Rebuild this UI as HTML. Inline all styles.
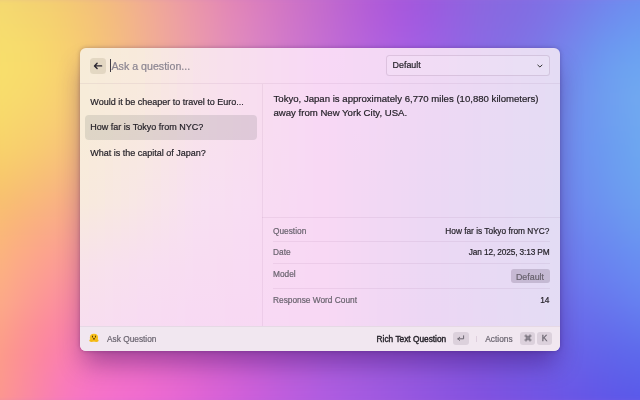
<!DOCTYPE html>
<html><head><meta charset="utf-8">
<style>
html,body{margin:0;padding:0;width:640px;height:400px;overflow:hidden;background:#b070d8;}
body{position:relative;font-family:"Liberation Sans",sans-serif;}
.bgwrap{position:absolute;left:0;top:0;width:640px;height:400px;overflow:hidden;}
.bg{position:absolute;left:0;top:0;width:640px;height:400px;filter:blur(4px);transform:scale(1.03);transform-origin:50% 50%;
 background:linear-gradient(#f5d970 0.0%,#f6dc6e 6.2%,#f7de6c 12.5%,#f8df6b 18.8%,#f8dd6b 25.0%,#f8d96a 31.2%,#f8d26a 37.5%,#f8ca6b 43.8%,#f8c16f 50.0%,#fabb75 56.2%,#fbb57c 62.5%,#fcb082 68.8%,#fcaa86 75.0%,#fca387 81.2%,#fd9d89 87.5%,#fc9a8b 93.8%,#fc978f 100.0%) 0px 0/11px 100% no-repeat,linear-gradient(#f4d771 0.0%,#f5da6f 6.2%,#f7dd6d 12.5%,#f8de6c 18.8%,#f8db6c 25.0%,#f8d76c 31.2%,#f8d16c 37.5%,#f8c86d 43.8%,#f8bf71 50.0%,#fab778 56.2%,#fbb17f 62.5%,#fcac85 68.8%,#fca68a 75.0%,#fc9e8b 81.2%,#fc978d 87.5%,#fc9591 93.8%,#fc9295 100.0%) 10px 0/11px 100% no-repeat,linear-gradient(#f4d571 0.0%,#f5d86f 6.2%,#f7dc6d 12.5%,#f8dc6c 18.8%,#f8da6d 25.0%,#f8d56d 31.2%,#f8cf6d 37.5%,#f8c670 43.8%,#f8bc74 50.0%,#fab47b 56.2%,#fcad83 62.5%,#fca789 68.8%,#fca18d 75.0%,#fc988f 81.2%,#fc9292 87.5%,#fc9097 93.8%,#fb8e9c 100.0%) 20px 0/11px 100% no-repeat,linear-gradient(#f4d271 0.0%,#f5d66f 6.2%,#f7da6d 12.5%,#f8db6c 18.8%,#f8d86d 25.0%,#f8d36e 31.2%,#f8cd6f 37.5%,#f8c472 43.8%,#f9ba77 50.0%,#fab17f 56.2%,#fcaa86 62.5%,#fca38d 68.8%,#fc9c91 75.0%,#fc9394 81.2%,#fc8d98 87.5%,#fb8b9e 93.8%,#fa89a3 100.0%) 30px 0/11px 100% no-repeat,linear-gradient(#f4d072 0.0%,#f5d46f 6.2%,#f7d86d 12.5%,#f8d96d 18.8%,#f8d66e 25.0%,#f8d170 31.2%,#f8cb71 37.5%,#f8c175 43.8%,#f9b87b 50.0%,#faae82 56.2%,#fca68a 62.5%,#fc9f90 68.8%,#fc9795 75.0%,#fc8e99 81.2%,#fc889e 87.5%,#fb86a5 93.8%,#fa84aa 100.0%) 40px 0/11px 100% no-repeat,linear-gradient(#f4ce72 0.0%,#f5d270 6.2%,#f7d56e 12.5%,#f8d66e 18.8%,#f8d370 25.0%,#f8cf72 31.2%,#f8c874 37.5%,#f8bf78 43.8%,#f9b57e 50.0%,#faac86 56.2%,#fca38d 62.5%,#fc9b94 68.8%,#fc9399 75.0%,#fc8a9e 81.2%,#fb84a4 87.5%,#fa82ac 93.8%,#f980b2 100.0%) 50px 0/11px 100% no-repeat,linear-gradient(#f4cb73 0.0%,#f5cf70 6.2%,#f7d26f 12.5%,#f8d370 18.8%,#f8d072 25.0%,#f8cc74 31.2%,#f8c577 37.5%,#f8bc7c 43.8%,#f9b282 50.0%,#faa989 56.2%,#fba091 62.5%,#fb9898 68.8%,#fb8f9e 75.0%,#fb87a3 81.2%,#fb81ab 87.5%,#fa7eb4 93.8%,#f87cb9 100.0%) 60px 0/11px 100% no-repeat,linear-gradient(#f4c874 0.0%,#f5cc72 6.2%,#f7cf71 12.5%,#f8cf72 18.8%,#f8cd74 25.0%,#f8c877 31.2%,#f8c27a 37.5%,#f8b97f 43.8%,#f8af86 50.0%,#f9a68d 56.2%,#fa9d94 62.5%,#fb949b 68.8%,#fb8ca2 75.0%,#fa84a9 81.2%,#fa7eb1 87.5%,#f97aba 93.8%,#f879bf 100.0%) 70px 0/11px 100% no-repeat,linear-gradient(#f3c577 0.0%,#f5c874 6.2%,#f6cb73 12.5%,#f7cb75 18.8%,#f7c977 25.0%,#f7c57a 31.2%,#f7be7e 37.5%,#f7b683 43.8%,#f8ad89 50.0%,#f9a391 56.2%,#fa9a98 62.5%,#fa919f 68.8%,#fa89a6 75.0%,#fa81ad 81.2%,#f97bb6 87.5%,#f878bf 93.8%,#f776c4 100.0%) 80px 0/11px 100% no-repeat,linear-gradient(#f3c179 0.0%,#f5c577 6.2%,#f6c776 12.5%,#f7c778 18.8%,#f7c57a 25.0%,#f7c17e 31.2%,#f7bb82 37.5%,#f7b387 43.8%,#f7aa8d 50.0%,#f8a094 56.2%,#f9979c 62.5%,#f98fa3 68.8%,#f986aa 75.0%,#f97fb2 81.2%,#f879bb 87.5%,#f775c3 93.8%,#f673c7 100.0%) 90px 0/11px 100% no-repeat,linear-gradient(#f3be7d 0.0%,#f4c17a 6.2%,#f5c37a 12.5%,#f6c37b 18.8%,#f6c17e 25.0%,#f6bd82 31.2%,#f6b786 37.5%,#f6af8b 43.8%,#f6a791 50.0%,#f79e98 56.2%,#f7959f 62.5%,#f88ca7 68.8%,#f884ae 75.0%,#f77db6 81.2%,#f777be 87.5%,#f673c6 93.8%,#f571ca 100.0%) 100px 0/11px 100% no-repeat,linear-gradient(#f3ba81 0.0%,#f4bd7e 6.2%,#f5bf7e 12.5%,#f5bf80 18.8%,#f5bd82 25.0%,#f5b986 31.2%,#f5b38a 37.5%,#f5ac8f 43.8%,#f5a495 50.0%,#f69b9c 56.2%,#f692a3 62.5%,#f68aaa 68.8%,#f682b2 75.0%,#f67bb9 81.2%,#f676c1 87.5%,#f572c8 93.8%,#f36fcc 100.0%) 110px 0/11px 100% no-repeat,linear-gradient(#f2b686 0.0%,#f3b983 6.2%,#f4bb83 12.5%,#f4bb84 18.8%,#f5b987 25.0%,#f4b58a 31.2%,#f4b08e 37.5%,#f4a893 43.8%,#f4a099 50.0%,#f498a0 56.2%,#f590a7 62.5%,#f587ae 68.8%,#f580b5 75.0%,#f579bc 81.2%,#f474c4 87.5%,#f370ca 93.8%,#f26ece 100.0%) 120px 0/11px 100% no-repeat,linear-gradient(#f2b28b 0.0%,#f3b589 6.2%,#f3b688 12.5%,#f4b689 18.8%,#f3b58c 25.0%,#f3b18f 31.2%,#f3ac93 37.5%,#f3a598 43.8%,#f39d9d 50.0%,#f395a3 56.2%,#f38daa 62.5%,#f385b1 68.8%,#f37eb8 75.0%,#f378bf 81.2%,#f373c6 87.5%,#f26fcb 93.8%,#f06ccf 100.0%) 130px 0/11px 100% no-repeat,linear-gradient(#f1ae90 0.0%,#f2b08f 6.2%,#f2b28e 12.5%,#f2b28f 18.8%,#f2b091 25.0%,#f2ad94 31.2%,#f2a897 37.5%,#f1a29c 43.8%,#f19aa1 50.0%,#f193a7 56.2%,#f18bae 62.5%,#f183b4 68.8%,#f17cbb 75.0%,#f176c1 81.2%,#f171c8 87.5%,#f06ecc 93.8%,#ef6bd0 100.0%) 140px 0/11px 100% no-repeat,linear-gradient(#f0a995 0.0%,#f1ac94 6.2%,#f1ad94 12.5%,#f1ae94 18.8%,#f1ac96 25.0%,#f0a999 31.2%,#f0a49c 37.5%,#f09ea0 43.8%,#ef97a5 50.0%,#ef90ab 56.2%,#ef89b1 62.5%,#ef81b7 68.8%,#ef7bbd 75.0%,#ef75c4 81.2%,#ee70c9 87.5%,#ee6cce 93.8%,#ec69d1 100.0%) 150px 0/11px 100% no-repeat,linear-gradient(#efa59a 0.0%,#f0a79a 6.2%,#f0a999 12.5%,#f0a99a 18.8%,#efa89b 25.0%,#efa59e 31.2%,#eea1a1 37.5%,#ee9ba5 43.8%,#ed94a9 50.0%,#ed8daf 56.2%,#ed86b4 62.5%,#ed7fba 68.8%,#ec79c0 75.0%,#ec73c6 81.2%,#ec6fcb 87.5%,#eb6bcf 93.8%,#ea68d2 100.0%) 160px 0/11px 100% no-repeat,linear-gradient(#eda09f 0.0%,#eea39f 6.2%,#eea49f 12.5%,#eea59f 18.8%,#eea4a0 25.0%,#eda1a2 31.2%,#ec9da5 37.5%,#ec98a9 43.8%,#eb92ad 50.0%,#eb8bb2 56.2%,#eb84b7 62.5%,#ea7dbd 68.8%,#ea77c2 75.0%,#ea72c8 81.2%,#e96dcc 87.5%,#e86ad0 93.8%,#e767d3 100.0%) 170px 0/11px 100% no-repeat,linear-gradient(#ec9ba3 0.0%,#ed9ea4 6.2%,#eda0a4 12.5%,#eca1a5 18.8%,#eca0a5 25.0%,#eb9da7 31.2%,#ea99aa 37.5%,#ea94ad 43.8%,#e98fb1 50.0%,#e988b6 56.2%,#e882bb 62.5%,#e87cc0 68.8%,#e776c5 75.0%,#e770c9 81.2%,#e66cce 87.5%,#e568d1 93.8%,#e465d4 100.0%) 180px 0/11px 100% no-repeat,linear-gradient(#ea97a7 0.0%,#eb99a9 6.2%,#eb9ca9 12.5%,#ea9caa 18.8%,#ea9caa 25.0%,#e999ac 31.2%,#e896ae 37.5%,#e791b1 43.8%,#e78cb5 50.0%,#e686b9 56.2%,#e580be 62.5%,#e57ac2 68.8%,#e474c7 75.0%,#e46fcb 81.2%,#e36bcf 87.5%,#e267d2 93.8%,#e064d5 100.0%) 190px 0/11px 100% no-repeat,linear-gradient(#e892ab 0.0%,#e995ad 6.2%,#e997ae 12.5%,#e898af 18.8%,#e898af 25.0%,#e796b1 31.2%,#e692b3 37.5%,#e58eb5 43.8%,#e489b8 50.0%,#e384bc 56.2%,#e37ec0 62.5%,#e278c5 68.8%,#e173c9 75.0%,#e06ecd 81.2%,#df69d0 87.5%,#de65d3 93.8%,#dd62d6 100.0%) 200px 0/11px 100% no-repeat,linear-gradient(#e68eaf 0.0%,#e791b1 6.2%,#e693b3 12.5%,#e694b3 18.8%,#e594b4 25.0%,#e492b5 31.2%,#e38fb7 37.5%,#e28bb9 43.8%,#e187bc 50.0%,#e081bf 56.2%,#e07cc3 62.5%,#df77c7 68.8%,#de71cb 75.0%,#dd6ccf 81.2%,#dc68d2 87.5%,#da64d4 93.8%,#d961d7 100.0%) 210px 0/11px 100% no-repeat,linear-gradient(#e489b2 0.0%,#e48cb5 6.2%,#e48fb7 12.5%,#e390b8 18.8%,#e390b8 25.0%,#e28eb9 31.2%,#e18cbb 37.5%,#e088bd 43.8%,#df84bf 50.0%,#de7fc2 56.2%,#dc7ac6 62.5%,#db75c9 68.8%,#da70cd 75.0%,#d96bd0 81.2%,#d867d3 87.5%,#d763d6 93.8%,#d560d8 100.0%) 220px 0/11px 100% no-repeat,linear-gradient(#e185b5 0.0%,#e288b9 6.2%,#e18bbb 12.5%,#e18cbc 18.8%,#e08cbc 25.0%,#df8bbd 31.2%,#de89be 37.5%,#dd85c0 43.8%,#dc81c3 50.0%,#da7dc5 56.2%,#d978c8 62.5%,#d873cc 68.8%,#d76fcf 75.0%,#d66ad2 81.2%,#d466d4 87.5%,#d362d7 93.8%,#d15fd9 100.0%) 230px 0/11px 100% no-repeat,linear-gradient(#de81b8 0.0%,#df85bc 6.2%,#de88bf 12.5%,#de89c0 18.8%,#dd89c0 25.0%,#dc88c1 31.2%,#db86c2 37.5%,#da83c4 43.8%,#d97fc6 50.0%,#d77bc8 56.2%,#d677cb 62.5%,#d572ce 68.8%,#d36ed1 75.0%,#d269d3 81.2%,#d065d6 87.5%,#cf61d8 93.8%,#cd5eda 100.0%) 240px 0/11px 100% no-repeat,linear-gradient(#db7ebb 0.0%,#dc81bf 6.2%,#db84c2 12.5%,#db85c3 18.8%,#da85c4 25.0%,#d984c4 31.2%,#d883c5 37.5%,#d780c7 43.8%,#d57dc9 50.0%,#d479cb 56.2%,#d375cd 62.5%,#d171d0 68.8%,#d06cd2 75.0%,#ce68d5 81.2%,#cc64d7 87.5%,#cb60d9 93.8%,#c95ddb 100.0%) 250px 0/11px 100% no-repeat,linear-gradient(#d87bbe 0.0%,#d87ec2 6.2%,#d880c5 12.5%,#d882c6 18.8%,#d782c7 25.0%,#d681c8 31.2%,#d580c9 37.5%,#d37dca 43.8%,#d27bcc 50.0%,#d177cd 56.2%,#cf73d0 62.5%,#ce6fd2 68.8%,#cc6bd4 75.0%,#ca67d6 81.2%,#c864d8 87.5%,#c760da 93.8%,#c55ddc 100.0%) 260px 0/11px 100% no-repeat,linear-gradient(#d478c0 0.0%,#d57ac4 6.2%,#d57dc7 12.5%,#d57ec9 18.8%,#d47fca 25.0%,#d37ecb 31.2%,#d27dcc 37.5%,#d07bcd 43.8%,#cf79ce 50.0%,#cd75d0 56.2%,#cc72d2 62.5%,#ca6ed4 68.8%,#c86ad6 75.0%,#c667d8 81.2%,#c463da 87.5%,#c25fdb 93.8%,#c15cdd 100.0%) 270px 0/11px 100% no-repeat,linear-gradient(#d175c3 0.0%,#d177c6 6.2%,#d179ca 12.5%,#d17bcc 18.8%,#d07bcd 25.0%,#cf7bce 31.2%,#ce7acf 37.5%,#cd79d0 43.8%,#cb77d1 50.0%,#ca74d2 56.2%,#c871d4 62.5%,#c66dd5 68.8%,#c46ad7 75.0%,#c266d9 81.2%,#c062db 87.5%,#be5fdc 93.8%,#bd5cde 100.0%) 280px 0/11px 100% no-repeat,linear-gradient(#cd72c5 0.0%,#ce74c9 6.2%,#ce76cc 12.5%,#ce78ce 18.8%,#cd78d0 25.0%,#cc79d0 31.2%,#cb78d1 37.5%,#c977d2 43.8%,#c875d3 50.0%,#c672d4 56.2%,#c46fd6 62.5%,#c36cd7 68.8%,#c169d9 75.0%,#bf65da 81.2%,#bc62dc 87.5%,#ba5fdd 93.8%,#b95bdf 100.0%) 290px 0/11px 100% no-repeat,linear-gradient(#c96fc7 0.0%,#ca71cb 6.2%,#ca73ce 12.5%,#ca75d1 18.8%,#ca76d2 25.0%,#c976d3 31.2%,#c776d4 37.5%,#c675d4 43.8%,#c473d5 50.0%,#c271d6 56.2%,#c16ed7 62.5%,#bf6bd9 68.8%,#bd68da 75.0%,#bb65db 81.2%,#b962dd 87.5%,#b75ede 93.8%,#b55bdf 100.0%) 300px 0/11px 100% no-repeat,linear-gradient(#c66dca 0.0%,#c66ecd 6.2%,#c770d1 12.5%,#c772d3 18.8%,#c673d4 25.0%,#c574d5 31.2%,#c474d6 37.5%,#c273d7 43.8%,#c171d7 50.0%,#bf6fd8 56.2%,#bd6dd9 62.5%,#bb6ada 68.8%,#b967db 75.0%,#b764dc 81.2%,#b561de 87.5%,#b35edf 93.8%,#b15be0 100.0%) 310px 0/11px 100% no-repeat,linear-gradient(#c26acc 0.0%,#c36bcf 6.2%,#c36dd3 12.5%,#c36fd5 18.8%,#c370d7 25.0%,#c171d8 31.2%,#c072d8 37.5%,#bf71d9 43.8%,#bd70d9 50.0%,#bb6eda 56.2%,#b96cdb 62.5%,#b769db 68.8%,#b567dc 75.0%,#b364dd 81.2%,#b161df 87.5%,#af5ee0 93.8%,#ae5ae0 100.0%) 320px 0/11px 100% no-repeat,linear-gradient(#be66ce 0.0%,#bf68d2 6.2%,#c06ad5 12.5%,#c06cd7 18.8%,#bf6ed9 25.0%,#be6fda 31.2%,#bc70da 37.5%,#bb70db 43.8%,#b96fdb 50.0%,#b76ddb 56.2%,#b66bdc 62.5%,#b469dd 68.8%,#b266dd 75.0%,#b063de 81.2%,#ae60df 87.5%,#ac5de0 93.8%,#ab5ae1 100.0%) 330px 0/11px 100% no-repeat,linear-gradient(#ba63d0 0.0%,#bb65d4 6.2%,#bc67d7 12.5%,#bc6ada 18.8%,#bb6cdb 25.0%,#ba6edc 31.2%,#b96edc 37.5%,#b76edc 43.8%,#b56edd 50.0%,#b46cdd 56.2%,#b26add 62.5%,#b068de 68.8%,#ae65de 75.0%,#ac63df 81.2%,#aa60e0 87.5%,#a95de0 93.8%,#a759e1 100.0%) 340px 0/11px 100% no-repeat,linear-gradient(#b760d3 0.0%,#b862d6 6.2%,#b965d9 12.5%,#b868dc 18.8%,#b86add 25.0%,#b66cde 31.2%,#b56dde 37.5%,#b36dde 43.8%,#b26dde 50.0%,#b06cde 56.2%,#ae6ade 62.5%,#ac67df 68.8%,#ab65df 75.0%,#a962df 81.2%,#a75fe0 87.5%,#a65ce0 93.8%,#a459e1 100.0%) 350px 0/11px 100% no-repeat,linear-gradient(#b35dd5 0.0%,#b45fd8 6.2%,#b563dc 12.5%,#b566dd 18.8%,#b469df 25.0%,#b36bdf 31.2%,#b16cdf 37.5%,#b06ce0 43.8%,#ae6ce0 50.0%,#ac6be0 56.2%,#ab69e0 62.5%,#a967e0 68.8%,#a764e0 75.0%,#a662e0 81.2%,#a45fe0 87.5%,#a35ce0 93.8%,#a258e1 100.0%) 360px 0/11px 100% no-repeat,linear-gradient(#af5bd7 0.0%,#b15dda 6.2%,#b161dd 12.5%,#b164df 18.8%,#b068e0 25.0%,#af6ae1 31.2%,#ad6be1 37.5%,#ac6ce1 43.8%,#aa6ce1 50.0%,#a96ae1 56.2%,#a769e1 62.5%,#a567e0 68.8%,#a464e0 75.0%,#a261e0 81.2%,#a15ee0 87.5%,#a05be0 93.8%,#9f57e0 100.0%) 370px 0/11px 100% no-repeat,linear-gradient(#ab59d8 0.0%,#ad5bdc 6.2%,#ae60df 12.5%,#ad63e1 18.8%,#ac67e2 25.0%,#ab69e2 31.2%,#aa6be2 37.5%,#a86be2 43.8%,#a66be2 50.0%,#a56ae2 56.2%,#a368e2 62.5%,#a266e1 68.8%,#a064e1 75.0%,#9f61e1 81.2%,#9e5ee0 87.5%,#9d5ae0 93.8%,#9c57e0 100.0%) 380px 0/11px 100% no-repeat,linear-gradient(#a758da 0.0%,#a95ade 6.2%,#aa5fe1 12.5%,#aa63e2 18.8%,#a966e3 25.0%,#a769e3 31.2%,#a66be3 37.5%,#a46be3 43.8%,#a36be3 50.0%,#a16ae3 56.2%,#a068e2 62.5%,#9e66e2 68.8%,#9d63e1 75.0%,#9c60e1 81.2%,#9b5de0 87.5%,#9a5ae0 93.8%,#9956e0 100.0%) 390px 0/11px 100% no-repeat,linear-gradient(#a458db 0.0%,#a55adf 6.2%,#a65fe2 12.5%,#a663e3 18.8%,#a566e4 25.0%,#a369e4 31.2%,#a26be5 37.5%,#a06be4 43.8%,#9f6be4 50.0%,#9d6ae4 56.2%,#9c68e3 62.5%,#9b66e3 68.8%,#9a63e2 75.0%,#9860e1 81.2%,#985de0 87.5%,#9759e0 93.8%,#9655e0 100.0%) 400px 0/11px 100% no-repeat,linear-gradient(#a059dc 0.0%,#a15be0 6.2%,#a25fe3 12.5%,#a263e4 18.8%,#a166e5 25.0%,#9f69e5 31.2%,#9e6be5 37.5%,#9d6ce5 43.8%,#9b6be5 50.0%,#9a6ae5 56.2%,#9868e4 62.5%,#9766e3 68.8%,#9663e2 75.0%,#9560e1 81.2%,#945ce1 87.5%,#9458e0 93.8%,#9354e0 100.0%) 410px 0/11px 100% no-repeat,linear-gradient(#9c5add 0.0%,#9d5ce0 6.2%,#9e60e3 12.5%,#9e64e5 18.8%,#9d67e6 25.0%,#9c6ae6 31.2%,#9a6ce6 37.5%,#996ce6 43.8%,#976ce6 50.0%,#966be5 56.2%,#9569e5 62.5%,#9466e4 68.8%,#9363e3 75.0%,#925fe2 81.2%,#915ce1 87.5%,#9158e0 93.8%,#9053e0 100.0%) 420px 0/11px 100% no-repeat,linear-gradient(#995cdd 0.0%,#995ee1 6.2%,#9a62e3 12.5%,#9a65e5 18.8%,#9968e6 25.0%,#986be7 31.2%,#966ce7 37.5%,#956de7 43.8%,#946de7 50.0%,#936be6 56.2%,#9169e5 62.5%,#9066e4 68.8%,#9063e3 75.0%,#8f5fe2 81.2%,#8e5be1 87.5%,#8e57e0 93.8%,#8d53e0 100.0%) 430px 0/11px 100% no-repeat,linear-gradient(#955fde 0.0%,#9661e1 6.2%,#9663e3 12.5%,#9666e5 18.8%,#9569e7 25.0%,#946ce7 31.2%,#936ee8 37.5%,#916ee8 43.8%,#906ee7 50.0%,#8f6ce7 56.2%,#8e6ae6 62.5%,#8d67e5 68.8%,#8c63e4 75.0%,#8c5fe2 81.2%,#8b5be1 87.5%,#8b56e0 93.8%,#8a52df 100.0%) 440px 0/11px 100% no-repeat,linear-gradient(#9261de 0.0%,#9263e1 6.2%,#9265e3 12.5%,#9268e5 18.8%,#916be7 25.0%,#906ee8 31.2%,#8f6fe8 37.5%,#8e70e8 43.8%,#8d6fe8 50.0%,#8c6de8 56.2%,#8b6be7 62.5%,#8a67e5 68.8%,#8963e4 75.0%,#895fe3 81.2%,#885ae1 87.5%,#8856e0 93.8%,#8751df 100.0%) 450px 0/11px 100% no-repeat,linear-gradient(#8f64df 0.0%,#8f65e1 6.2%,#8f67e4 12.5%,#8e6ae6 18.8%,#8e6de7 25.0%,#8c6fe8 31.2%,#8b71e9 37.5%,#8a71e9 43.8%,#8970e9 50.0%,#886fe8 56.2%,#876ce7 62.5%,#8768e6 68.8%,#8664e4 75.0%,#855fe3 81.2%,#855ae1 87.5%,#8555e0 93.8%,#8451e0 100.0%) 460px 0/11px 100% no-repeat,linear-gradient(#8c66df 0.0%,#8b68e1 6.2%,#8b69e4 12.5%,#8b6ce6 18.8%,#8a6fe8 25.0%,#8972e9 31.2%,#8873ea 37.5%,#8773ea 43.8%,#8672e9 50.0%,#8570e9 56.2%,#846de8 62.5%,#8369e7 68.8%,#8365e5 75.0%,#8260e3 81.2%,#825ae2 87.5%,#8255e0 93.8%,#8150e0 100.0%) 470px 0/11px 100% no-repeat,linear-gradient(#8968df 0.0%,#8969e1 6.2%,#886be4 12.5%,#886ee6 18.8%,#8772e8 25.0%,#8574e9 31.2%,#8475ea 37.5%,#8375ea 43.8%,#8374ea 50.0%,#8272e9 56.2%,#816ee8 62.5%,#806ae7 68.8%,#8065e6 75.0%,#7f60e4 81.2%,#7f5be2 87.5%,#7f55e1 93.8%,#7e50e0 100.0%) 480px 0/11px 100% no-repeat,linear-gradient(#8769e0 0.0%,#866be2 6.2%,#856de4 12.5%,#8471e6 18.8%,#8374e8 25.0%,#8277ea 31.2%,#8178eb 37.5%,#8078eb 43.8%,#8076eb 50.0%,#7f73ea 56.2%,#7e70e9 62.5%,#7d6be8 68.8%,#7d66e6 75.0%,#7c61e4 81.2%,#7c5be3 87.5%,#7c56e1 93.8%,#7c50e1 100.0%) 490px 0/11px 100% no-repeat,linear-gradient(#856ae1 0.0%,#846ce2 6.2%,#836fe4 12.5%,#8174e7 18.8%,#8077e9 25.0%,#7f7aea 31.2%,#7e7beb 37.5%,#7d7aec 43.8%,#7d78eb 50.0%,#7c75eb 56.2%,#7b71ea 62.5%,#7b6de8 68.8%,#7a67e7 75.0%,#7962e5 81.2%,#795ce3 87.5%,#7956e2 93.8%,#7951e1 100.0%) 500px 0/11px 100% no-repeat,linear-gradient(#836be2 0.0%,#826ee3 6.2%,#8072e5 12.5%,#7f77e8 18.8%,#7d7bea 25.0%,#7c7deb 31.2%,#7b7eec 37.5%,#7a7dec 43.8%,#7a7bec 50.0%,#7977eb 56.2%,#7973ea 62.5%,#786ee9 68.8%,#7768e7 75.0%,#7763e6 81.2%,#765de4 87.5%,#7657e3 93.8%,#7651e2 100.0%) 510px 0/11px 100% no-repeat,linear-gradient(#816de3 0.0%,#8070e4 6.2%,#7e75e6 12.5%,#7c7ae8 18.8%,#7a7eea 25.0%,#7980ec 31.2%,#7881ec 37.5%,#7880ed 43.8%,#777ded 50.0%,#777aec 56.2%,#7675eb 62.5%,#7570ea 68.8%,#756ae8 75.0%,#7464e6 81.2%,#745de5 87.5%,#7358e4 93.8%,#7352e3 100.0%) 520px 0/11px 100% no-repeat,linear-gradient(#7f6fe4 0.0%,#7e73e5 6.2%,#7b78e7 12.5%,#797ee9 18.8%,#7882eb 25.0%,#7784ec 31.2%,#7684ed 37.5%,#7583ed 43.8%,#7580ed 50.0%,#747ced 56.2%,#7477ec 62.5%,#7372ea 68.8%,#726be9 75.0%,#7165e7 81.2%,#715ee5 87.5%,#7158e4 93.8%,#7053e4 100.0%) 530px 0/11px 100% no-repeat,linear-gradient(#7e72e5 0.0%,#7b76e7 6.2%,#797de8 12.5%,#7783ea 18.8%,#7586ec 25.0%,#7488ed 31.2%,#7488ee 37.5%,#7386ee 43.8%,#7383ee 50.0%,#727fed 56.2%,#727aec 62.5%,#7173eb 68.8%,#706de9 75.0%,#6f66e8 81.2%,#6e5fe6 87.5%,#6e59e5 93.8%,#6e53e4 100.0%) 540px 0/11px 100% no-repeat,linear-gradient(#7c74e7 0.0%,#797ae8 6.2%,#7681ea 12.5%,#7487eb 18.8%,#738bed 25.0%,#728cee 31.2%,#718bee 37.5%,#718aee 43.8%,#7186ee 50.0%,#7082ee 56.2%,#707ced 62.5%,#6f75ec 68.8%,#6e6eea 75.0%,#6c67e8 81.2%,#6c60e7 87.5%,#6b5ae6 93.8%,#6b54e5 100.0%) 550px 0/11px 100% no-repeat,linear-gradient(#7a78e8 0.0%,#777eea 6.2%,#7486eb 12.5%,#728ced 18.8%,#718fed 25.0%,#7190ee 31.2%,#708fef 37.5%,#6f8def 43.8%,#6f8aef 50.0%,#6f85ee 56.2%,#6e7eee 62.5%,#6d78ed 68.8%,#6c70eb 75.0%,#6a69e9 81.2%,#6961e7 87.5%,#695be7 93.8%,#6854e6 100.0%) 560px 0/11px 100% no-repeat,linear-gradient(#777be9 0.0%,#7483eb 6.2%,#718bed 12.5%,#7091ee 18.8%,#7094ee 25.0%,#6f94ef 31.2%,#6e93ef 37.5%,#6e91ef 43.8%,#6e8def 50.0%,#6d88ef 56.2%,#6c81ee 62.5%,#6c7aed 68.8%,#6a72ec 75.0%,#686aea 81.2%,#6662e8 87.5%,#665be7 93.8%,#6654e6 100.0%) 570px 0/11px 100% no-repeat,linear-gradient(#757feb 0.0%,#7287ec 6.2%,#6f90ee 12.5%,#6e96ef 18.8%,#6f98ef 25.0%,#6e98ef 31.2%,#6d97f0 37.5%,#6d94ef 43.8%,#6d91ef 50.0%,#6c8bef 56.2%,#6b84ef 62.5%,#6a7dee 68.8%,#6974ec 75.0%,#666bea 81.2%,#6463e9 87.5%,#635be8 93.8%,#6355e7 100.0%) 580px 0/11px 100% no-repeat,linear-gradient(#7382ec 0.0%,#708bee 6.2%,#6d95ef 12.5%,#6d9bf0 18.8%,#6e9def 25.0%,#6e9cf0 31.2%,#6c9af0 37.5%,#6c98f0 43.8%,#6c94f0 50.0%,#6c8ef0 56.2%,#6a87f0 62.5%,#697fef 68.8%,#6877ed 75.0%,#656deb 81.2%,#6264e9 87.5%,#615ce8 93.8%,#6155e8 100.0%) 590px 0/11px 100% no-repeat,linear-gradient(#7186ed 0.0%,#6e8eef 6.2%,#6c98f0 12.5%,#6d9ff0 18.8%,#6fa0f0 25.0%,#6ea0f0 31.2%,#6c9ef0 37.5%,#6c9cf0 43.8%,#6c98f0 50.0%,#6b91f0 56.2%,#6a8af0 62.5%,#6982f0 68.8%,#6779ee 75.0%,#646fec 81.2%,#6065ea 87.5%,#5f5de9 93.8%,#5e55e8 100.0%) 600px 0/11px 100% no-repeat,linear-gradient(#6f89ee 0.0%,#6d92f0 6.2%,#6c9bf1 12.5%,#6da2f0 18.8%,#6fa4f0 25.0%,#6ea3f0 31.2%,#6ca1f0 37.5%,#6c9ff0 43.8%,#6c9bf0 50.0%,#6b95f0 56.2%,#698df1 62.5%,#6885f0 68.8%,#677cef 75.0%,#6371ed 81.2%,#5f67eb 87.5%,#5d5ee9 93.8%,#5c56e9 100.0%) 610px 0/11px 100% no-repeat,linear-gradient(#6d8bef 0.0%,#6c94f0 6.2%,#6b9ef1 12.5%,#6da4f1 18.8%,#70a7f0 25.0%,#6fa6f0 31.2%,#6da5f0 37.5%,#6ca2f0 43.8%,#6c9ef0 50.0%,#6b98f0 56.2%,#6990f1 62.5%,#6888f1 68.8%,#667ff0 75.0%,#6274ed 81.2%,#5e68eb 87.5%,#5c5fea 93.8%,#5a57e9 100.0%) 620px 0/11px 100% no-repeat,linear-gradient(#6c8ef0 0.0%,#6b97f1 6.2%,#6ba0f1 12.5%,#6da6f1 18.8%,#70a9f0 25.0%,#6fa9f0 31.2%,#6da8f0 37.5%,#6ca5f0 43.8%,#6ca1f0 50.0%,#6a9af1 56.2%,#6992f1 62.5%,#688af1 68.8%,#6681f0 75.0%,#6176ee 81.2%,#5d6aec 87.5%,#5a60eb 93.8%,#5958ea 100.0%) 630px 0/11px 100% no-repeat;}
.shadow{position:absolute;left:80px;top:48px;width:480px;height:303px;border-radius:6px;
 box-shadow:0 16px 26px -4px rgba(50,0,90,0.42),0 0 4px rgba(40,0,60,0.28);}
.win{position:absolute;left:80px;top:48px;width:480px;height:303px;border-radius:6px;overflow:hidden;will-change:transform;}
.wbg{position:absolute;left:0;top:0;width:480px;height:303px;background:linear-gradient(#f7ecd8 0.0%,#f7ecd9 12.9%,#f7ecd9 25.9%,#f8ebdb 38.5%,#f8eadd 51.1%,#f8e6e4 61.9%,#f8e2ea 72.7%,#f8dfee 87.1%,#f8dcf2 100.0%) 0px 0/9px 100% no-repeat,linear-gradient(#f7ecd9 0.0%,#f7ecda 12.9%,#f7ebda 25.9%,#f8eadc 38.5%,#f8e9de 51.1%,#f8e5e5 61.9%,#f8e1eb 72.7%,#f8deef 87.1%,#f8dcf2 100.0%) 8px 0/9px 100% no-repeat,linear-gradient(#f7ebd9 0.0%,#f7ebda 12.9%,#f7ebdb 25.9%,#f8eadd 38.5%,#f8e9df 51.1%,#f8e5e6 61.9%,#f8e1ec 72.7%,#f8deef 87.1%,#f8dbf2 100.0%) 16px 0/9px 100% no-repeat,linear-gradient(#f7ebda 0.0%,#f7ebdb 12.9%,#f7ebdc 25.9%,#f8e9de 38.5%,#f8e8e1 51.1%,#f8e4e7 61.9%,#f8e1ed 72.7%,#f8def0 87.1%,#f8dbf2 100.0%) 24px 0/9px 100% no-repeat,linear-gradient(#f8ebda 0.0%,#f8eadc 12.9%,#f8eadd 25.9%,#f8e9e0 38.5%,#f8e8e2 51.1%,#f8e4e8 61.9%,#f8e0ee 72.7%,#f8ddf0 87.1%,#f8dbf3 100.0%) 32px 0/9px 100% no-repeat,linear-gradient(#f8ebdb 0.0%,#f8eadd 12.9%,#f8eade 25.9%,#f8e8e1 38.5%,#f8e7e3 51.1%,#f8e3e9 61.9%,#f8e0ee 72.7%,#f8ddf1 87.1%,#f8dbf3 100.0%) 40px 0/9px 100% no-repeat,linear-gradient(#f8eadb 0.0%,#f8eadd 12.9%,#f8e9df 25.9%,#f8e8e2 38.5%,#f8e7e5 51.1%,#f8e3ea 61.9%,#f8dfef 72.7%,#f8ddf1 87.1%,#f8daf3 100.0%) 48px 0/9px 100% no-repeat,linear-gradient(#f8eadc 0.0%,#f8eade 12.9%,#f8e9e0 25.9%,#f8e8e3 38.5%,#f8e6e6 51.1%,#f8e2eb 61.9%,#f8dff0 72.7%,#f8dcf2 87.1%,#f8daf3 100.0%) 56px 0/9px 100% no-repeat,linear-gradient(#f8e9de 0.0%,#f8e8e0 12.9%,#f8e8e2 25.9%,#f8e7e5 38.5%,#f8e5e8 51.1%,#f8e2ec 61.9%,#f8dff0 72.7%,#f8dcf2 87.1%,#f8daf3 100.0%) 64px 0/9px 100% no-repeat,linear-gradient(#f8e8e0 0.0%,#f8e8e1 12.9%,#f8e7e3 25.9%,#f8e6e6 38.5%,#f8e4e9 51.1%,#f8e1ed 61.9%,#f8def1 72.7%,#f8dcf2 87.1%,#f8d9f3 100.0%) 72px 0/9px 100% no-repeat,linear-gradient(#f8e7e2 0.0%,#f8e6e3 12.9%,#f8e6e5 25.9%,#f8e5e8 38.5%,#f8e4eb 51.1%,#f8e1ee 61.9%,#f8def1 72.7%,#f8dbf2 87.1%,#f8d9f3 100.0%) 80px 0/9px 100% no-repeat,linear-gradient(#f8e6e3 0.0%,#f8e6e5 12.9%,#f8e5e6 25.9%,#f8e4e9 38.5%,#f8e3ec 51.1%,#f8e0ef 61.9%,#f8ddf1 72.7%,#f8dbf2 87.1%,#f8d9f4 100.0%) 88px 0/9px 100% no-repeat,linear-gradient(#f8e5e5 0.0%,#f8e4e7 12.9%,#f8e4e8 25.9%,#f8e3eb 38.5%,#f8e2ee 51.1%,#f8e0f0 61.9%,#f8ddf1 72.7%,#f8dbf3 87.1%,#f8d9f4 100.0%) 96px 0/9px 100% no-repeat,linear-gradient(#f8e4e7 0.0%,#f8e4e8 12.9%,#f8e3ea 25.9%,#f8e2ed 38.5%,#f8e1f0 51.1%,#f8dff1 61.9%,#f8ddf2 72.7%,#f8daf3 87.1%,#f8d8f4 100.0%) 104px 0/9px 100% no-repeat,linear-gradient(#f8e3e9 0.0%,#f8e2ea 12.9%,#f8e2eb 25.9%,#f8e1ee 38.5%,#f8e0f1 51.1%,#f8def2 61.9%,#f8dcf2 72.7%,#f8daf3 87.1%,#f8d8f4 100.0%) 112px 0/9px 100% no-repeat,linear-gradient(#f8e2ea 0.0%,#f8e2eb 12.9%,#f8e2ec 25.9%,#f8e1ef 38.5%,#f8e0f2 51.1%,#f8def2 61.9%,#f8dcf2 72.7%,#f8daf3 87.1%,#f8d8f4 100.0%) 120px 0/9px 100% no-repeat,linear-gradient(#f8e1eb 0.0%,#f8e1ec 12.9%,#f8e1ed 25.9%,#f8e0f0 38.5%,#f8dff2 51.1%,#f8ddf2 61.9%,#f8dcf2 72.7%,#f8daf3 87.1%,#f8d8f4 100.0%) 128px 0/9px 100% no-repeat,linear-gradient(#f8e0ec 0.0%,#f8e0ed 12.9%,#f8e0ee 25.9%,#f8e0f0 38.5%,#f8dff2 51.1%,#f8ddf2 61.9%,#f8dbf2 72.7%,#f8daf3 87.1%,#f8d8f4 100.0%) 136px 0/9px 100% no-repeat,linear-gradient(#f8e0ed 0.0%,#f8e0ed 12.9%,#f8e0ee 25.9%,#f8dff0 38.5%,#f8def2 51.1%,#f8ddf2 61.9%,#f8dbf2 72.7%,#f8d9f3 87.1%,#f8d8f4 100.0%) 144px 0/9px 100% no-repeat,linear-gradient(#f8dfee 0.0%,#f8dfee 12.9%,#f8dfef 25.9%,#f8def1 38.5%,#f8def3 51.1%,#f8dcf3 61.9%,#f8dbf3 72.7%,#f8d9f3 87.1%,#f8d8f4 100.0%) 152px 0/9px 100% no-repeat,linear-gradient(#f8deee 0.0%,#f8deef 12.9%,#f8deef 25.9%,#f8def1 38.5%,#f8ddf3 51.1%,#f8dcf3 61.9%,#f8dbf3 72.7%,#f8d9f3 87.1%,#f8d8f4 100.0%) 160px 0/9px 100% no-repeat,linear-gradient(#f8deef 0.0%,#f8def0 12.9%,#f8def0 25.9%,#f8ddf1 38.5%,#f8ddf3 51.1%,#f8dbf3 61.9%,#f8daf3 72.7%,#f8d9f3 87.1%,#f8d8f4 100.0%) 168px 0/9px 100% no-repeat,linear-gradient(#f8ddf0 0.0%,#f8ddf0 12.9%,#f8ddf0 25.9%,#f8dcf2 38.5%,#f8dcf3 51.1%,#f8dbf3 61.9%,#f8daf3 72.7%,#f8d9f4 87.1%,#f8d8f4 100.0%) 176px 0/9px 100% no-repeat,linear-gradient(#f8dcf1 0.0%,#f8dcf1 12.9%,#f8dcf1 25.9%,#f8dcf2 38.5%,#f8dbf3 51.1%,#f8dbf3 61.9%,#f8daf3 72.7%,#f8d9f4 87.1%,#f8d8f4 100.0%) 184px 0/9px 100% no-repeat,linear-gradient(#f8dcf2 0.0%,#f8dcf2 12.9%,#f8dcf2 25.9%,#f8dbf2 38.5%,#f8dbf3 51.1%,#f8daf3 61.9%,#f8d9f3 72.7%,#f8d9f4 87.1%,#f8d8f4 100.0%) 192px 0/9px 100% no-repeat,linear-gradient(#f8dbf2 0.0%,#f8dbf2 12.9%,#f8dbf2 25.9%,#f8dbf3 38.5%,#f8daf3 51.1%,#f8daf3 61.9%,#f8d9f3 72.7%,#f8d9f4 87.1%,#f8d8f4 100.0%) 200px 0/9px 100% no-repeat,linear-gradient(#f8daf3 0.0%,#f8daf3 12.9%,#f8daf3 25.9%,#f8daf3 38.5%,#f8daf4 51.1%,#f8d9f4 61.9%,#f8d9f4 72.7%,#f8d8f4 87.1%,#f8d8f4 100.0%) 208px 0/9px 100% no-repeat,linear-gradient(#f8daf4 0.0%,#f8daf4 12.9%,#f8daf4 25.9%,#f8daf4 38.5%,#f8d9f4 51.1%,#f8d9f4 61.9%,#f8d9f4 72.7%,#f8d8f4 87.1%,#f8d8f4 100.0%) 216px 0/9px 100% no-repeat,linear-gradient(#f8d9f5 0.0%,#f8d9f4 12.9%,#f8d9f4 25.9%,#f8d9f4 38.5%,#f8d9f4 51.1%,#f8d9f4 61.9%,#f8d8f4 72.7%,#f8d8f4 87.1%,#f8d8f4 100.0%) 224px 0/9px 100% no-repeat,linear-gradient(#f8d8f6 0.0%,#f8d8f5 12.9%,#f8d8f5 25.9%,#f8d8f4 38.5%,#f8d8f4 51.1%,#f8d8f4 61.9%,#f8d8f4 72.7%,#f8d8f4 87.1%,#f8d8f4 100.0%) 232px 0/9px 100% no-repeat,linear-gradient(#f8d8f6 0.0%,#f8d8f5 12.9%,#f8d8f5 25.9%,#f8d8f4 38.5%,#f8d8f4 51.1%,#f8d8f4 61.9%,#f8d8f4 72.7%,#f8d8f4 87.1%,#f8d8f4 100.0%) 240px 0/9px 100% no-repeat,linear-gradient(#f7d8f6 0.0%,#f7d8f5 12.9%,#f7d8f5 25.9%,#f7d8f4 38.5%,#f7d8f4 51.1%,#f7d8f4 61.9%,#f7d8f4 72.7%,#f7d8f4 87.1%,#f7d8f4 100.0%) 248px 0/9px 100% no-repeat,linear-gradient(#f7d8f6 0.0%,#f6d8f5 12.9%,#f6d8f5 25.9%,#f6d8f4 38.5%,#f6d8f4 51.1%,#f6d8f4 61.9%,#f6d8f4 72.7%,#f6d8f4 87.1%,#f6d8f4 100.0%) 256px 0/9px 100% no-repeat,linear-gradient(#f6d8f5 0.0%,#f6d8f5 12.9%,#f5d8f5 25.9%,#f5d8f4 38.5%,#f5d8f4 51.1%,#f5d8f4 61.9%,#f5d8f4 72.7%,#f5d8f4 87.1%,#f5d7f4 100.0%) 264px 0/9px 100% no-repeat,linear-gradient(#f5d8f5 0.0%,#f5d8f5 12.9%,#f5d8f5 25.9%,#f4d8f4 38.5%,#f4d8f4 51.1%,#f4d8f4 61.9%,#f4d8f4 72.7%,#f4d8f4 87.1%,#f4d7f4 100.0%) 272px 0/9px 100% no-repeat,linear-gradient(#f5d8f5 0.0%,#f4d8f5 12.9%,#f4d8f5 25.9%,#f4d8f4 38.5%,#f3d8f4 51.1%,#f3d8f4 61.9%,#f3d8f4 72.7%,#f3d8f4 87.1%,#f3d7f4 100.0%) 280px 0/9px 100% no-repeat,linear-gradient(#f4d8f5 0.0%,#f4d8f5 12.9%,#f3d8f5 25.9%,#f3d8f4 38.5%,#f2d8f4 51.1%,#f2d8f4 61.9%,#f2d8f4 72.7%,#f2d8f4 87.1%,#f2d7f4 100.0%) 288px 0/9px 100% no-repeat,linear-gradient(#f4d8f5 0.0%,#f3d8f5 12.9%,#f3d8f4 25.9%,#f2d8f4 38.5%,#f1d8f4 51.1%,#f1d8f4 61.9%,#f1d8f4 72.7%,#f1d7f4 87.1%,#f1d7f4 100.0%) 296px 0/9px 100% no-repeat,linear-gradient(#f3d8f5 0.0%,#f2d8f5 12.9%,#f2d8f4 25.9%,#f1d8f4 38.5%,#f1d8f4 51.1%,#f1d8f4 61.9%,#f1d8f4 72.7%,#f1d7f4 87.1%,#f1d7f4 100.0%) 304px 0/9px 100% no-repeat,linear-gradient(#f2d8f5 0.0%,#f2d8f4 12.9%,#f1d8f4 25.9%,#f0d8f4 38.5%,#f0d8f4 51.1%,#f0d8f4 61.9%,#f0d8f4 72.7%,#f0d7f4 87.1%,#f0d7f4 100.0%) 312px 0/9px 100% no-repeat,linear-gradient(#f2d8f4 0.0%,#f1d8f4 12.9%,#f0d8f4 25.9%,#f0d8f4 38.5%,#efd8f4 51.1%,#efd8f4 61.9%,#efd8f4 72.7%,#efd7f4 87.1%,#efd6f4 100.0%) 320px 0/9px 100% no-repeat,linear-gradient(#f1d8f4 0.0%,#f0d8f4 12.9%,#f0d8f4 25.9%,#efd8f4 38.5%,#eed8f4 51.1%,#eed8f4 61.9%,#eed8f4 72.7%,#eed7f4 87.1%,#eed6f4 100.0%) 328px 0/9px 100% no-repeat,linear-gradient(#f1d8f4 0.0%,#f0d8f4 12.9%,#efd8f4 25.9%,#eed8f4 38.5%,#edd8f4 51.1%,#edd8f4 61.9%,#edd8f4 72.7%,#edd7f4 87.1%,#edd6f4 100.0%) 336px 0/9px 100% no-repeat,linear-gradient(#f0d8f4 0.0%,#efd8f4 12.9%,#eed8f4 25.9%,#edd8f4 38.5%,#ecd8f4 51.1%,#ecd8f4 61.9%,#ecd8f4 72.7%,#ecd7f4 87.1%,#ecd6f4 100.0%) 344px 0/9px 100% no-repeat,linear-gradient(#efd8f4 0.0%,#eed8f4 12.9%,#eed8f4 25.9%,#edd8f4 38.5%,#ecd8f4 51.1%,#ecd8f4 61.9%,#ecd8f4 72.7%,#ecd7f4 87.1%,#ecd6f4 100.0%) 352px 0/9px 100% no-repeat,linear-gradient(#efd8f4 0.0%,#eed8f4 12.9%,#edd8f4 25.9%,#ecd8f4 38.5%,#ebd8f4 51.1%,#ebd8f4 61.9%,#ebd8f4 72.7%,#ebd7f4 87.1%,#ebd7f4 100.0%) 360px 0/9px 100% no-repeat,linear-gradient(#eed9f4 0.0%,#edd9f4 12.9%,#ecd9f4 25.9%,#ebd9f4 38.5%,#ead9f4 51.1%,#ead9f4 61.9%,#ead9f4 72.7%,#ebd8f4 87.1%,#ebd7f4 100.0%) 368px 0/9px 100% no-repeat,linear-gradient(#edd9f4 0.0%,#ecd9f4 12.9%,#ecd9f4 25.9%,#ebd9f4 38.5%,#ead9f4 51.1%,#ead9f4 61.9%,#ead9f4 72.7%,#ead8f4 87.1%,#ead7f4 100.0%) 376px 0/9px 100% no-repeat,linear-gradient(#ecd9f4 0.0%,#ecd9f4 12.9%,#ebd9f4 25.9%,#ead9f4 38.5%,#e9d9f4 51.1%,#e9d9f4 61.9%,#e9d9f4 72.7%,#ead8f4 87.1%,#ead8f4 100.0%) 384px 0/9px 100% no-repeat,linear-gradient(#ecd9f4 0.0%,#ebd9f4 12.9%,#ead9f4 25.9%,#e9d9f4 38.5%,#e8d9f4 51.1%,#e9d9f4 61.9%,#e9d9f4 72.7%,#e9d9f4 87.1%,#e9d8f4 100.0%) 392px 0/9px 100% no-repeat,linear-gradient(#ebdaf4 0.0%,#eadaf4 12.9%,#eadaf4 25.9%,#e9daf4 38.5%,#e8daf4 51.1%,#e8daf4 61.9%,#e8daf4 72.7%,#e8d9f4 87.1%,#e9d8f4 100.0%) 400px 0/9px 100% no-repeat,linear-gradient(#eadaf4 0.0%,#eadaf4 12.9%,#e9daf4 25.9%,#e8daf4 38.5%,#e7daf4 51.1%,#e7daf4 61.9%,#e8daf4 72.7%,#e8d9f4 87.1%,#e8d9f4 100.0%) 408px 0/9px 100% no-repeat,linear-gradient(#eadaf4 0.0%,#e9daf4 12.9%,#e9daf4 25.9%,#e8daf4 38.5%,#e7daf4 51.1%,#e7daf4 61.9%,#e7daf4 72.7%,#e7daf4 87.1%,#e8d9f4 100.0%) 416px 0/9px 100% no-repeat,linear-gradient(#e9daf4 0.0%,#e8daf4 12.9%,#e8daf4 25.9%,#e7daf4 38.5%,#e6daf4 51.1%,#e6daf4 61.9%,#e7daf4 72.7%,#e7daf4 87.1%,#e7daf4 100.0%) 424px 0/9px 100% no-repeat,linear-gradient(#e8dbf4 0.0%,#e8dbf4 12.9%,#e7dbf4 25.9%,#e6dbf4 38.5%,#e5dbf4 51.1%,#e6dbf4 61.9%,#e6dbf4 72.7%,#e6daf4 87.1%,#e7daf4 100.0%) 432px 0/9px 100% no-repeat,linear-gradient(#e7dbf4 0.0%,#e7dbf4 12.9%,#e7dbf4 25.9%,#e6dbf4 38.5%,#e5dbf4 51.1%,#e5dbf4 61.9%,#e5dbf4 72.7%,#e6dbf4 87.1%,#e6daf4 100.0%) 440px 0/9px 100% no-repeat,linear-gradient(#e7dbf4 0.0%,#e6dbf4 12.9%,#e6dbf4 25.9%,#e5dbf4 38.5%,#e4dbf4 51.1%,#e5dbf4 61.9%,#e5dbf4 72.7%,#e5dbf4 87.1%,#e6dbf4 100.0%) 448px 0/9px 100% no-repeat,linear-gradient(#e6dbf4 0.0%,#e6dbf4 12.9%,#e6dbf4 25.9%,#e5dbf4 38.5%,#e4dbf4 51.1%,#e4dbf4 61.9%,#e4dbf4 72.7%,#e5dbf4 87.1%,#e5dbf4 100.0%) 456px 0/9px 100% no-repeat,linear-gradient(#e5dcf4 0.0%,#e5dcf4 12.9%,#e5dcf4 25.9%,#e4dcf4 38.5%,#e3dcf4 51.1%,#e3dcf4 61.9%,#e4dcf4 72.7%,#e4dcf4 87.1%,#e5dbf4 100.0%) 464px 0/9px 100% no-repeat,linear-gradient(#e4dcf4 0.0%,#e4dcf4 12.9%,#e4dcf4 25.9%,#e3dcf4 38.5%,#e2dcf4 51.1%,#e3dcf4 61.9%,#e3dcf4 72.7%,#e4dcf4 87.1%,#e4dcf4 100.0%) 472px 0/9px 100% no-repeat;}
.abs{position:absolute;white-space:nowrap;}
.t{position:absolute;white-space:nowrap;-webkit-text-stroke:0.2px currentColor;}
.hdr-line{position:absolute;left:0;top:35px;width:480px;height:1px;background:rgba(60,0,60,0.06);}
.back{position:absolute;left:10px;top:10px;width:15.6px;height:15.6px;border-radius:3.5px;background:rgba(60,40,0,0.1);}
.caret{position:absolute;left:29.9px;top:11.2px;width:1.5px;height:12.4px;background:#3e3a44;}
.ph{left:31.5px;top:10.66px;font-size:10.65px;line-height:14px;color:#8b8591;}
.dd{position:absolute;left:305.9px;top:7.1px;width:163.9px;height:20.5px;border-radius:3.5px;border:1px solid rgba(60,0,60,0.12);background:rgba(255,255,255,0.12);box-sizing:border-box;}
.vline{position:absolute;left:182px;top:36px;width:1px;height:242px;background:rgba(60,0,60,0.06);}
.item{left:10.3px;font-size:9px;line-height:12px;color:#221f26;}
.sel{position:absolute;left:5px;top:66.5px;width:172.3px;height:25px;border-radius:4px;background:rgba(30,40,40,0.11);}
.ans{left:193.5px;top:44.2px;font-size:9.6px;line-height:13.35px;color:#221f26;}
.meta-top{position:absolute;left:182px;top:169px;width:298px;height:1px;background:rgba(60,0,60,0.06);}
.mrow{position:absolute;left:193px;width:276.5px;height:1px;background:rgba(60,0,60,0.06);}
.mk{left:193px;font-size:8.32px;line-height:11px;color:#6b6570;}
.mv{right:10.5px;font-size:8.32px;line-height:11px;color:#221f26;text-align:right;}
.tag{position:absolute;left:430.9px;top:220.9px;width:39px;height:14.1px;border-radius:3px;background:rgba(40,20,50,0.17);}
.ftr{position:absolute;left:0;top:277.8px;width:480px;height:26px;background:#f1e7f0;border-top:1px solid rgba(60,0,60,0.06);box-sizing:border-box;}
.ft{font-size:8.32px;line-height:11px;}
.key{position:absolute;width:15.3px;height:12.8px;border-radius:3px;background:rgba(40,20,50,0.1);}
</style></head>
<body>
<div class="bgwrap"><div class="bg"></div></div>
<div class="shadow"></div>
<div class="win">
 <div class="wbg"></div>
 <div class="back"><svg width="15.6" height="15.6" viewBox="0 0 15.6 15.6" style="position:absolute;left:0;top:0"><path d="M4.5 7.9H11.6M4.5 7.9L7.1 5.3M4.5 7.9L7.1 10.5" stroke="#2a2630" stroke-width="1.4" fill="none" stroke-linecap="round" stroke-linejoin="round"/></svg></div>
 <div class="caret"></div>
 <div class="t ph">Ask a question...</div>
 <div class="dd"></div>
 <div class="t item" style="left:312.6px;top:11.9px;font-size:8.9px;line-height:11px">Default</div>
 <svg width="8" height="6" viewBox="0 0 8 6" style="position:absolute;left:455.5px;top:15px"><path d="M1.8 2.1L3.9 4L6 2.1" stroke="#333" stroke-width="1.0" fill="none" stroke-linecap="round" stroke-linejoin="round"/></svg>
 <div class="hdr-line"></div>
 <div class="vline"></div>
 <div class="t item" style="top:47.78px">Would it be cheaper to travel to Euro...</div>
 <div class="sel"></div>
 <div class="t item" style="top:73.38px">How far is Tokyo from NYC?</div>
 <div class="t item" style="top:98.98px">What is the capital of Japan?</div>
 <div class="t ans">Tokyo, Japan is approximately 6,770 miles (10,880 kilometers)<br>away from New York City, USA.</div>
 <div class="meta-top"></div>
 <div class="t mk" style="top:177.6px">Question</div><div class="t mv" style="top:177.6px">How far is Tokyo from NYC?</div>
 <div class="mrow" style="top:193px"></div>
 <div class="t mk" style="top:199.3px">Date</div><div class="t mv" style="top:199.3px;letter-spacing:-0.14px">Jan 12, 2025, 3:13 PM</div>
 <div class="mrow" style="top:215px"></div>
 <div class="t mk" style="top:221px">Model</div>
 <div class="tag"></div><div class="t mk" style="left:435.9px;top:223.7px;font-size:8.9px;color:#67616c">Default</div>
 <div class="mrow" style="top:240px"></div>
 <div class="t mk" style="top:247.3px">Response Word Count</div><div class="t mv" style="top:247.3px">14</div>
 <div class="ftr"></div>
 <svg width="12" height="10" viewBox="0 0 12 10" style="position:absolute;left:8px;top:285.3px">
  <circle cx="5.95" cy="4.75" r="4.1" fill="#f7c01c"/>
  <ellipse cx="3.4" cy="7.6" rx="2.15" ry="1.3" fill="#f4b914"/>
  <ellipse cx="8.5" cy="7.6" rx="2.15" ry="1.3" fill="#f4b914"/>
  <rect x="3.95" y="2.6" width="1.05" height="1.95" rx="0.4" fill="#5a3a0c"/>
  <rect x="6.95" y="2.6" width="1.05" height="1.95" rx="0.4" fill="#5a3a0c"/>
  <ellipse cx="5.97" cy="5.7" rx="0.95" ry="1.0" fill="#6a440e"/>
 </svg>
 <div class="t ft" style="left:27px;top:286px;color:#6b6570">Ask Question</div>
 <div class="t ft" style="left:296.6px;top:286px;color:#221f26;-webkit-text-stroke:0.4px #29262d">Rich Text Question</div>
 <div class="key" style="left:373.1px;top:283.9px;width:15.7px"></div>
 <svg width="10" height="8" viewBox="0 0 10 8" style="position:absolute;left:376px;top:287px"><path d="M7.6 0.8V3.8H2M2 3.8L3.7 2.2M2 3.8L3.7 5.4" stroke="#6b6570" stroke-width="1" fill="none" stroke-linecap="round" stroke-linejoin="round"/></svg>
 <div class="abs" style="left:396.3px;top:287.7px;width:1px;height:6.3px;background:rgba(60,0,60,0.1)"></div>
 <div class="t ft" style="left:405.3px;top:286px;color:#6b6570">Actions</div>
 <div class="key" style="left:439.9px;top:284px;width:15.5px"></div>
 <svg width="8" height="8" viewBox="0 0 8 8" style="position:absolute;left:443.6px;top:286.45px"><g stroke="#6b6570" stroke-width="0.8" fill="none"><path d="M3.05 2V6M4.95 2V6M2 3.05H6M2 4.95H6"/><circle cx="2" cy="2" r="1.05"/><circle cx="6" cy="2" r="1.05"/><circle cx="2" cy="6" r="1.05"/><circle cx="6" cy="6" r="1.05"/></g></svg>
 <div class="key" style="left:457.3px;top:284px;width:14.7px"></div>
 <div class="t ft" style="left:461.8px;top:285px;color:#6b6570;-webkit-text-stroke:0.3px #6b6570">K</div>
</div>
</body></html>
